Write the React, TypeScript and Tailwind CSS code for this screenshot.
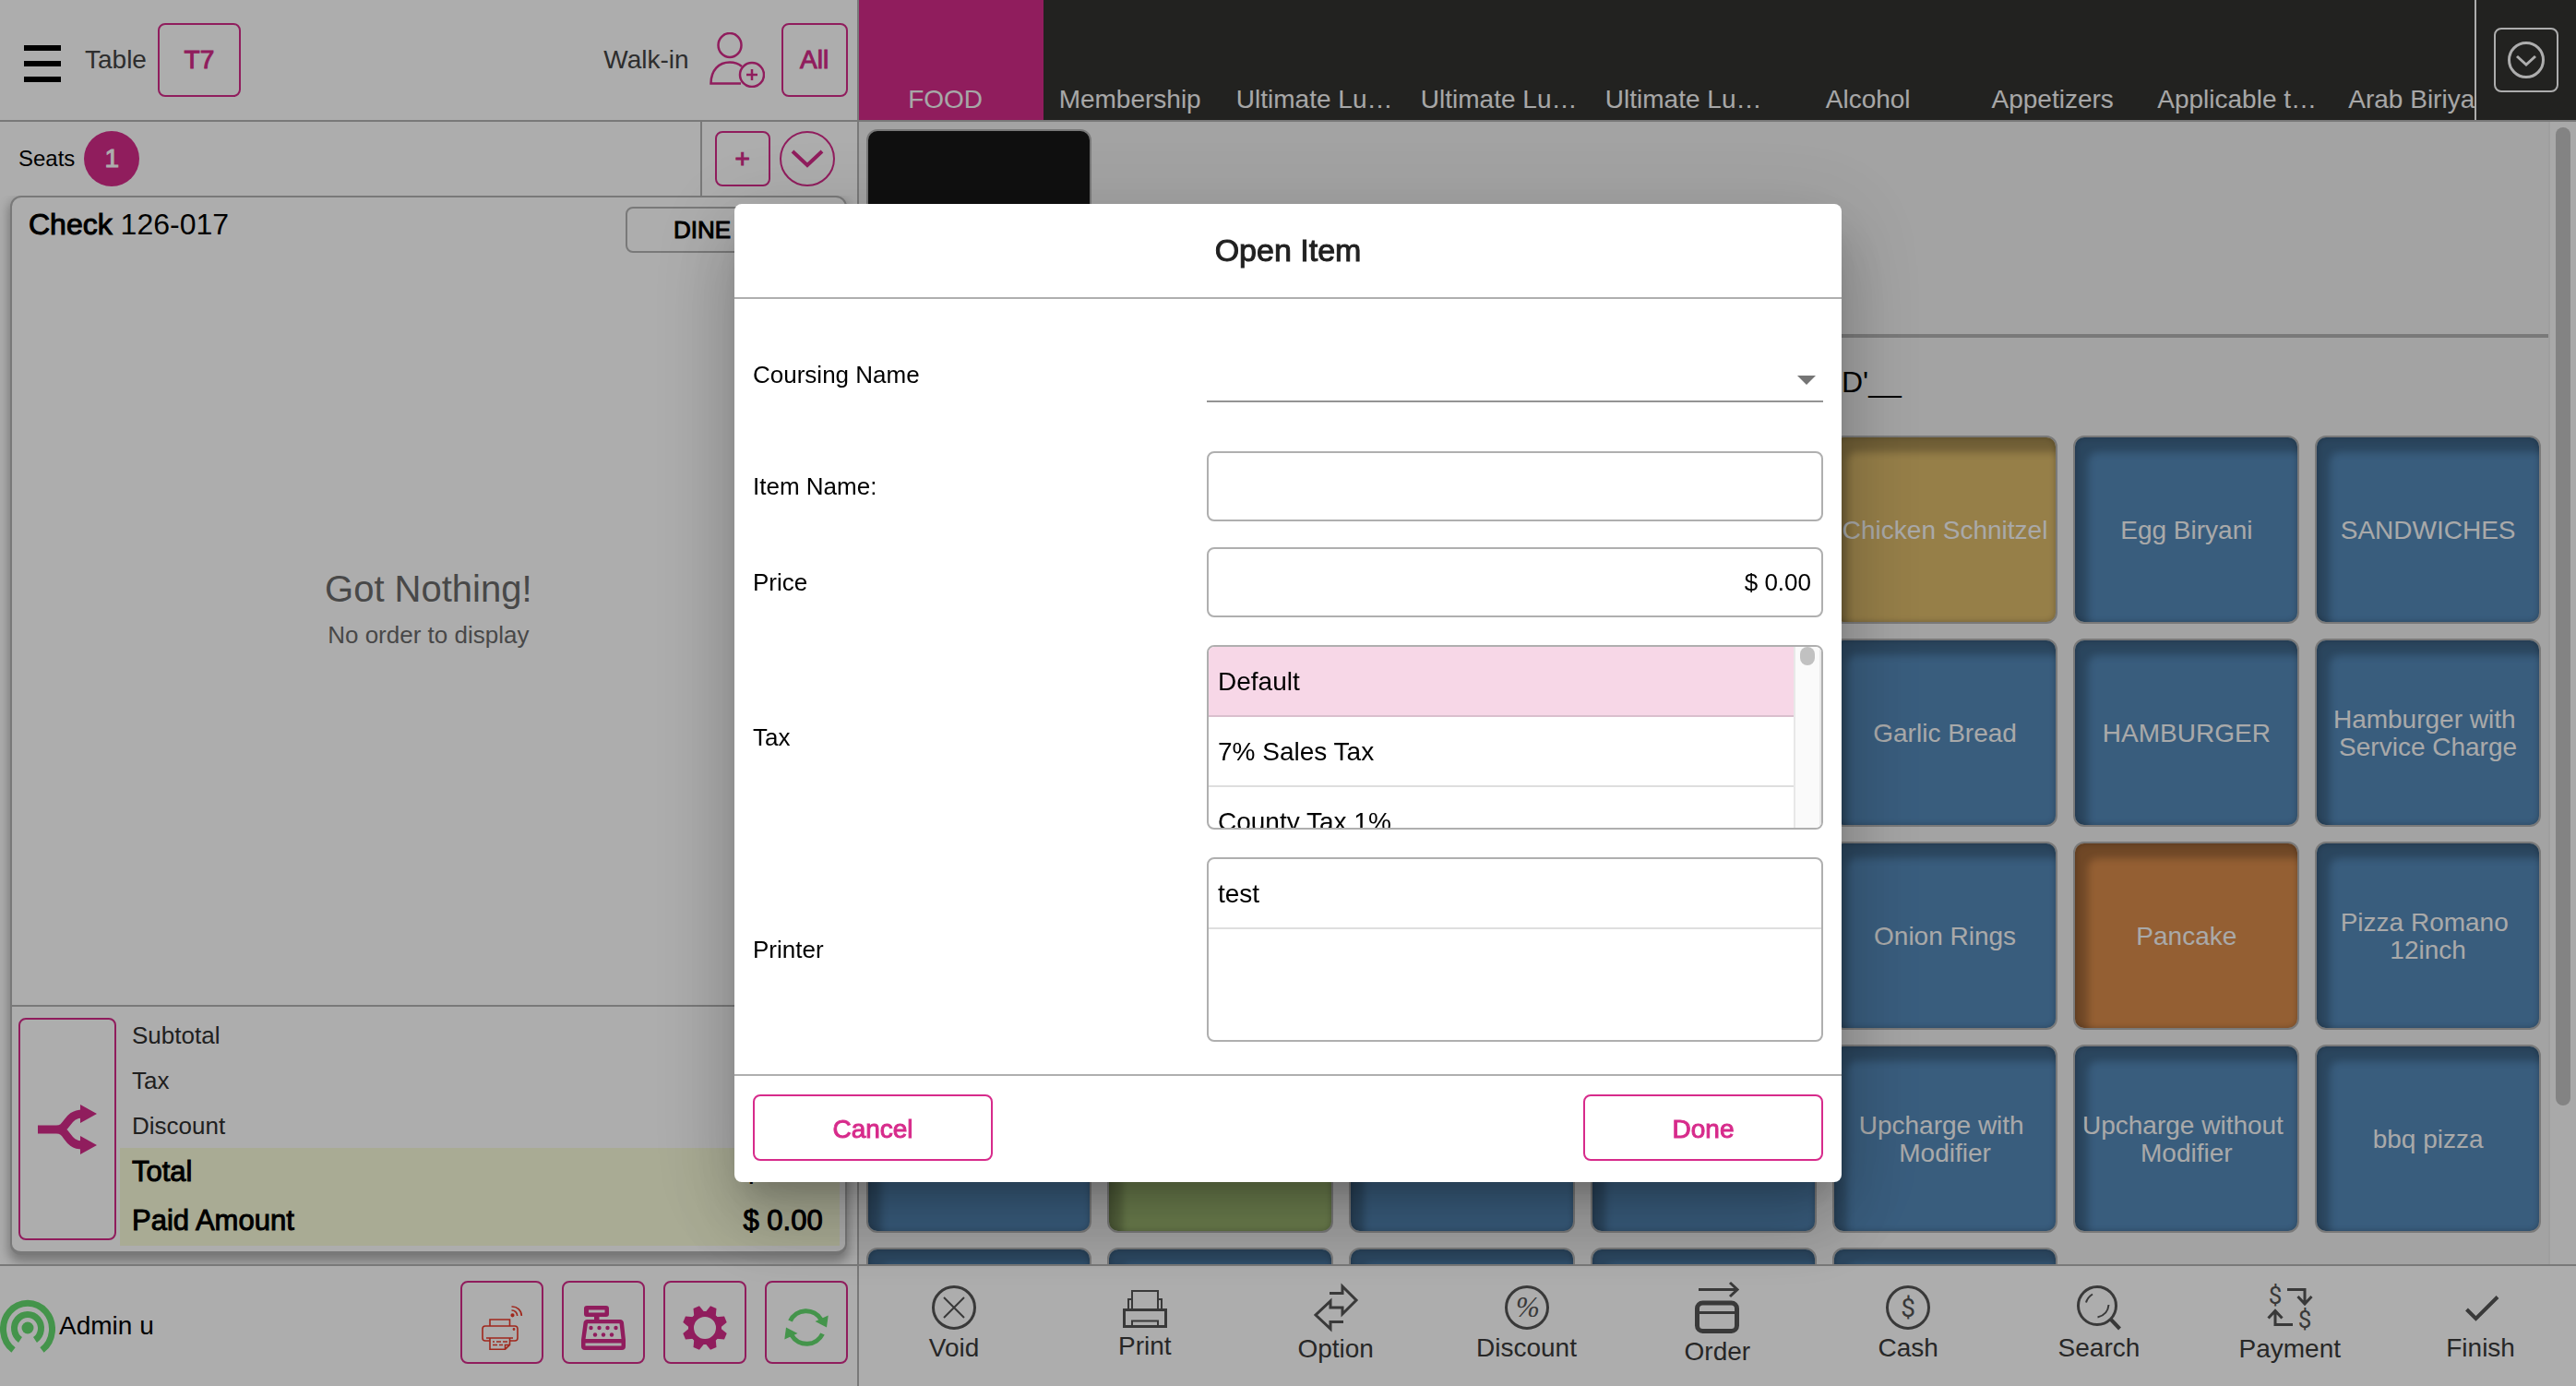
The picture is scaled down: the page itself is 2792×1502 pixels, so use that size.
import React from "react";

/* ---------- icons ---------- */

function PersonAddIcon() {
  return (
    <svg width="60" height="60" viewBox="0 0 60 60" fill="none" stroke="currentColor" strokeWidth="2.5">
      <ellipse cx="22" cy="14" rx="12.5" ry="13" />
      <path d="M34 55.5H1.5C1.5 41 10 32.500 22 32.500c5 0 9.500 1.500 13 4.500" />
      <circle cx="46" cy="46" r="13" />
      <path d="M46 40v12M40 46h12" />
    </svg>
  );
}

function ChevronIcon() {
  return (
    <svg width="36" height="20" viewBox="0 0 36 20" fill="none" stroke="currentColor" strokeWidth="4">
      <path d="M2 2l16 15L34 2" />
    </svg>
  );
}

function CircleChevronIcon() {
  return (
    <svg width="40" height="40" viewBox="0 0 40 40" fill="none" stroke="currentColor" strokeWidth="3">
      <circle cx="20" cy="20" r="18.500" />
      <path d="M10 16l10 9 10-9" />
    </svg>
  );
}

function SplitIcon() {
  return (
    <svg width="64" height="54" viewBox="0 0 64 54" fill="currentColor">
      <path
        d="M0 27H24M20 27C34 27 30 10 49 10M20 27C34 27 30 44 49 44"
        fill="none"
        stroke="currentColor"
        strokeWidth="9"
      />
      <path d="M46 0l18 10-18 10zM46 34l18 10-18 10z" />
    </svg>
  );
}

function BroadcastIcon() {
  return (
    <svg width="60" height="60" viewBox="0 0 60 60" fill="none" stroke="#65db6f" strokeWidth="7">
      <path d="M14.500 56A26.500 28 0 1 1 45.500 56" />
      <path d="M22 45A14.500 15 0 1 1 38 45" />
      <circle cx="30" cy="32" r="6.500" fill="#65db6f" stroke="none" />
    </svg>
  );
}

function WirelessPrinterIcon() {
  return (
    <svg width="48" height="48" viewBox="0 0 48 48" fill="none" stroke="#ec3b2b" strokeWidth="1.600">
      <path d="M11 22v-7h21.500v7" />
      <path d="M11 38H6a3 3 0 0 1-3-3V25a3 3 0 0 1 3-3h32a3 3 0 0 1 3 3v10a3 3 0 0 1-3 3h-5" />
      <path d="M7 35h29M11 35v12.300h16.500l5-5V35M27.500 47v-4.500h5" />
      <path d="M14 39h2m2 0h5m2 0h5M14 42.500h5m2 0h4" />
      <circle cx="37" cy="25.500" r=".6" />
      <circle cx="35.500" cy="10.300" r="1.300" fill="#ec3b2b" />
      <path d="M34.500 5a6 6 0 0 1 6.200 6M34.500 1a10 10 0 0 1 10.800 10" />
    </svg>
  );
}

function RegisterIcon() {
  return (
    <svg width="48" height="48" viewBox="0 0 48 48" fill="currentColor">
      <path
        fillRule="evenodd"
        d="M6 0H27a3 3 0 0 1 3 3V9a3 3 0 0 1-3 3H19.500v3H42a4 4 0 0 1 4 3.500L48 37v7a4 4 0 0 1-4 4H4a4 4 0 0 1-4-4V37L2.500 18.500A4 4 0 0 1 6.500 15H14V12H6a3 3 0 0 1-3-3V3A3 3 0 0 1 6 0ZM8 4.500V7.500H25.500V4.500ZM7 19.300 4.600 36H43.500L41.500 19.300ZM4.500 40.500v3h39v-3Z"
      />
      <g>
        <circle cx="10.500" cy="24" r="2.200" />
        <circle cx="19.500" cy="24" r="2.200" />
        <circle cx="28.500" cy="24" r="2.200" />
        <circle cx="37.500" cy="24" r="2.200" />
        <circle cx="15" cy="31.500" r="2.200" />
        <circle cx="24" cy="31.500" r="2.200" />
        <circle cx="33" cy="31.500" r="2.200" />
      </g>
    </svg>
  );
}

function GearIcon() {
  const teeth = [22.5, 67.5, 112.5, 157.5, 202.5, 247.5, 292.5, 337.5];
  return (
    <svg width="48" height="48" viewBox="0 0 48 48" fill="currentColor">
      <circle cx="24" cy="24" r="15" fill="none" stroke="currentColor" strokeWidth="6" />
      {teeth.map((angle) => (
        <path key={angle} d="M18 8l2.500-8.200h7L30 8z" transform={`rotate(${angle} 24 24)`} />
      ))}
    </svg>
  );
}

function SyncIcon() {
  return (
    <svg width="48" height="48" viewBox="0 0 48 48" fill="none">
      {[0, 180].map((angle) => (
        <g key={angle} transform={`rotate(${angle} 24 23.500)`}>
          <path d="M6.500 16.500A19 19 0 0 1 40 15" stroke="#65db6f" strokeWidth="5" />
          <path d="M47.700 10.500L46 23.500 33.500 17z" fill="#65db6f" />
        </g>
      ))}
    </svg>
  );
}

type IconProps = { width: number; height: number; children: React.ReactNode };

function ActionIcon({ width, height, children }: IconProps) {
  return (
    <svg
      width={width}
      height={height}
      viewBox={`0 0 ${width} ${height}`}
      className="overflow-visible"
      fill="none"
      stroke="#545454"
      strokeWidth="3"
    >
      {children}
    </svg>
  );
}

function Glyph({ x, y, size, children }: { x: number; y: number; size: number; children: string }) {
  return (
    <text
      x={x}
      y={y}
      fontSize={size}
      textAnchor="middle"
      fill="#545454"
      stroke="none"
      fontFamily="Roboto, sans-serif"
    >
      {children}
    </text>
  );
}

const actions: { label: string; icon: React.ReactNode }[] = [
  {
    label: "Void",
    icon: (
      <ActionIcon width={48} height={48}>
        <circle cx="24" cy="24" r="22.500" />
        <path d="M13 13l22 22M35 13L13 35" strokeWidth="2" />
      </ActionIcon>
    ),
  },
  {
    label: "Print",
    icon: (
      <ActionIcon width={48} height={44}>
        <path d="M1.500 24.500h45v18h-45z" />
        <path d="M10 24V4h28v20M10 13H6v11M38 13h4v11M10 42v-5.500h28V42" strokeWidth="2" />
      </ActionIcon>
    ),
  },
  {
    label: "Option",
    icon: (
      <ActionIcon width={48} height={50}>
        <path d="M17 9.500H31V2L46 17 31 32V25H18V18L2 33 18 48V40.500H32" />
      </ActionIcon>
    ),
  },
  {
    label: "Discount",
    icon: (
      <ActionIcon width={48} height={48}>
        <circle cx="24" cy="24" r="22.500" />
        <text
          x="25"
          y="34"
          fontSize="31"
          textAnchor="middle"
          fill="#545454"
          stroke="none"
          fontFamily="'Liberation Serif', serif"
          fontStyle="italic"
        >
          %
        </text>
      </ActionIcon>
    ),
  },
  {
    label: "Order",
    icon: (
      <ActionIcon width={48} height={56}>
        <path d="M4 8.500h42M38 1l8 7.500-8 7.500" />
        <rect x="2.500" y="23" width="43" height="30.500" rx="6" strokeWidth="5" />
        <path d="M3 33.500h42" />
      </ActionIcon>
    ),
  },
  {
    label: "Cash",
    icon: (
      <ActionIcon width={48} height={48}>
        <circle cx="24" cy="24" r="22.500" />
        <Glyph x={24} y={34} size={28}>$</Glyph>
      </ActionIcon>
    ),
  },
  {
    label: "Search",
    icon: (
      <ActionIcon width={48} height={48}>
        <circle cx="22" cy="22" r="20.500" />
        <path d="M37 37l9.500 10" strokeWidth="4" />
        <path d="M10 18.500q1.500-5.500 7-9M34.500 21q-1 11-12 13.500" strokeWidth="2" />
      </ActionIcon>
    ),
  },
  {
    label: "Payment",
    icon: (
      <ActionIcon width={48} height={50}>
        <Glyph x={8} y={21} size={26}>$</Glyph>
        <Glyph x={40} y={47} size={26}>$</Glyph>
        <path d="M21 5.500h19v15M32.500 13l7.500 8 7.500-8M27 43.500H8V29M.500 36.500l7.500-8 7.500 8" />
      </ActionIcon>
    ),
  },
  {
    label: "Finish",
    icon: (
      <ActionIcon width={48} height={48}>
        <path d="M8.500 26l10 10L42 12.500" strokeWidth="4" />
      </ActionIcon>
    ),
  },
];

/* ---------- data ---------- */

const tabs = [
  "FOOD",
  "Membership",
  "Ultimate Lu…",
  "Ultimate Lu…",
  "Ultimate Lu…",
  "Alcohol",
  "Appetizers",
  "Applicable t…",
  "Arab Biriyani",
];

const BLUE = "bg-[#5489b9]";
const GOLD = "bg-[#ddbb6b]";
const ORANGE = "bg-[#db8d4c]";
const GREEN = "bg-[#a0bb73]";

type Item = { name?: string; color: string };

const blank: Item = { color: BLUE };

const items: Item[] = [
  blank, blank, blank, blank,
  { name: "Chicken Schnitzel", color: GOLD },
  { name: "Egg Biryani", color: BLUE },
  { name: "SANDWICHES", color: BLUE },
  blank, blank, blank, blank,
  { name: "Garlic Bread", color: BLUE },
  { name: "HAMBURGER", color: BLUE },
  { name: "Hamburger with\u00a0\nService Charge", color: BLUE },
  blank, blank, blank, blank,
  { name: "Onion Rings", color: BLUE },
  { name: "Pancake", color: ORANGE },
  { name: "Pizza Romano\u00a0\n12inch", color: BLUE },
  blank,
  { color: GREEN },
  blank, blank,
  { name: "Upcharge with\u00a0\nModifier", color: BLUE },
  { name: "Upcharge without\u00a0\nModifier", color: BLUE },
  { name: "bbq pizza", color: BLUE },
  blank, blank, blank, blank, blank,
];

const medium = "[-webkit-text-stroke:1px_currentColor]";

/* ---------- left pane ---------- */

function OrderPane() {
  return (
    <section className="flex w-1/3 shrink-0 flex-col border-r-2 border-[#b3b3b3] bg-white">
      <header className="flex h-[132px] shrink-0 items-center border-b-2 border-[#b3b3b3] pr-[10px] pl-[26px] text-[28px] text-[#444]">
        <button aria-label="Menu" className="mt-2 flex flex-col gap-[11px]">
          <span className="h-[6px] w-10 bg-black" />
          <span className="h-[6px] w-10 bg-black" />
          <span className="h-[6px] w-10 bg-black" />
        </button>
        <span className="ml-[26px]">Table</span>
        <button className={`ml-3 h-20 w-[90px] rounded-lg border-2 border-[#d52b8a] text-[#d52b8a] ${medium}`}>
          T7
        </button>
        <span className="ml-auto">Walk-in</span>
        <button aria-label="Add customer" className="ml-[22px] text-[#d52b8a]">
          <PersonAddIcon />
        </button>
        <button className={`ml-[18px] h-20 w-[72px] rounded-lg border-2 border-[#d52b8a] text-[#d52b8a] ${medium}`}>
          All
        </button>
      </header>

      <div className="relative z-10 flex h-20 shrink-0 items-stretch bg-white">
        <div className="flex flex-1 items-center gap-[10px] pl-5">
          <span className="text-2xl text-black">Seats</span>
          <button className={`size-[60px] rounded-full bg-[#d52b8a] text-[28px] text-white ${medium}`}>1</button>
        </div>
        <div className="flex items-center gap-[10px] border-l-2 border-[#b3b3b3] pr-6 pl-[14px] text-[#d52b8a]">
          <button className={`size-[60px] rounded-lg border-2 border-[#d52b8a] text-[28px] ${medium}`}>+</button>
          <button
            aria-label="Expand seats"
            className="flex size-[60px] items-center justify-center rounded-full border-2 border-[#d52b8a]"
          >
            <ChevronIcon />
          </button>
        </div>
      </div>

      <div className="mx-[11px] mb-[10px] flex min-h-0 flex-1 flex-col rounded-xl border-2 border-b-4 border-[#b3b3b3] bg-white shadow-[0_6px_12px_2px_rgba(0,0,0,0.3)]">
        <div className="flex h-[64px] items-start justify-between pt-[10px] pr-[10px] pl-[18px]">
          <h2 className="text-[32px] leading-[38px] text-black">
            <span className={medium}>Check</span> 126-017
          </h2>
          <button className={`h-[50px] w-[228px] rounded-lg border-2 border-[#b3b3b3] pr-7 text-[26px] text-black ${medium}`}>
            DINE IN
          </button>
        </div>
        <div className="flex min-h-0 flex-1 flex-col items-center justify-center pb-12 text-[#6b6b6b]">
          <p className="text-[40px] leading-[56px]">Got Nothing!</p>
          <p className="text-[26px] leading-[44px]">No order to display</p>
        </div>
        <div className="flex border-t-2 border-[#b3b3b3] py-[6px] pr-[6px] pl-[7px]">
          <button
            aria-label="Split check"
            className="my-[6px] mr-1 flex w-[106px] shrink-0 items-center justify-center rounded-lg border-2 border-[#d52b8a] text-[#d52b8a]"
          >
            <SplitIcon />
          </button>
          <dl className="flex-1 text-[26px] text-[#303030]">
            <dt className="h-[49px] pl-[13px] leading-[50px]">Subtotal</dt>
            <dt className="h-[49px] pl-[13px] leading-[50px]">Tax</dt>
            <dt className="h-[49px] pl-[13px] leading-[50px]">Discount</dt>
            <div className={`flex h-[53px] items-center justify-between bg-[#fafddb] pr-[18px] pl-[13px] text-[31px] text-black ${medium}`}>
              <dt>Total</dt>
              <dd>$ 0.00</dd>
            </div>
            <div className={`flex h-[53px] items-center justify-between bg-[#fafddb] pr-[18px] pl-[13px] text-[31px] text-black ${medium}`}>
              <dt>Paid Amount</dt>
              <dd>$ 0.00</dd>
            </div>
          </dl>
        </div>
      </div>

      <footer className="relative flex h-[132px] shrink-0 items-center border-t-2 border-[#b3b3b3] bg-white pr-[10px] text-[#d52b8a]">
        <BroadcastIcon />
        <span className="ml-1 text-[28px] text-black">Admin u</span>
        <div className="mb-2 ml-auto flex gap-5">
          {[
            { label: "Printer status", icon: <WirelessPrinterIcon /> },
            { label: "Cash drawer", icon: <RegisterIcon /> },
            { label: "Settings", icon: <GearIcon /> },
            { label: "Sync", icon: <SyncIcon /> },
          ].map((b) => (
            <button
              key={b.label}
              aria-label={b.label}
              className="flex size-[90px] items-center justify-center rounded-lg border-2 border-[#d52b8a] pt-3"
            >
              {b.icon}
            </button>
          ))}
        </div>
      </footer>
    </section>
  );
}

/* ---------- right pane ---------- */

function MenuPane() {
  return (
    <section className="flex min-w-0 flex-1 flex-col bg-[#f1f1f1]">
      <nav className="flex h-[132px] shrink-0 border-b-2 border-[#b3b3b3] bg-[#333330] text-[28px] text-white">
        <div className="flex min-w-0 flex-1 overflow-hidden">
          {tabs.map((tab, i) => (
            <button
              key={i}
              className={`flex w-[200px] shrink-0 items-end justify-center pr-3 pb-1 leading-9 whitespace-nowrap text-[#f6f6f6] ${
                i === 0 ? "bg-[#d52b8a]" : ""
              }`}
            >
              {tab}
            </button>
          ))}
        </div>
        <div className="flex items-center border-l-2 border-white px-[19px]">
          <button
            aria-label="More categories"
            className="flex size-[70px] items-center justify-center rounded-lg border-2 border-white"
          >
            <CircleChevronIcon />
          </button>
        </div>
      </nav>

      <div className="flex min-h-0 flex-1">
        <div className="min-w-0 flex-1 overflow-hidden">
          <div className="grid grid-cols-7 gap-x-[17px] px-2 pt-2 pb-[18px]">
            <button
              aria-label="Category"
              className="h-[204px] rounded-xl border-2 border-[#b3b3b3] bg-[#171717]"
            />
          </div>
          <h2 className="flex h-[100px] items-center justify-center border-t-4 border-[#b3b3b3] pl-1 text-[32px] text-black">
            __Menu Items from 'FOOD'__
          </h2>
          <div className="mt-[10px] grid grid-cols-7 gap-x-[17px] gap-y-4 px-2">
            {items.map((item, i) => (
              <button
                key={i}
                className={`h-[204px] rounded-xl border-2 border-[#b3b3b3] pt-[2px] text-center text-[28px] leading-[30px] whitespace-pre text-[#fafafa] shadow-[inset_14px_16px_8px_rgba(0,0,0,0.25),inset_0_0_6px_rgba(0,0,0,0.25)] ${item.color}`}
              >
                <span className="flex justify-center">{item.name}</span>
              </button>
            ))}
          </div>
        </div>
        <div className="w-[30px] shrink-0 border-l-2 border-[#ebebeb] bg-[#fafafa] px-[6px] pt-[6px]">
          <div className="h-[86%] w-4 rounded-full bg-[#c1c1c1]" />
        </div>
      </div>

      <footer className="grid h-[132px] shrink-0 grid-cols-9 border-t-2 border-[#b3b3b3] bg-white">
        {actions.map((a) => (
          <button key={a.label} className="flex flex-col items-center justify-center text-[28px] leading-10 text-[#3a3a3a]">
            {a.icon}
            <span>{a.label}</span>
          </button>
        ))}
      </footer>
    </section>
  );
}

/* ---------- dialog ---------- */

const field = "h-[76px] w-full rounded-lg border-2 border-[#afafaf] bg-white px-[11px] text-[26px] text-black outline-none";

function OpenItemDialog() {
  return (
    <div className="fixed inset-0 z-20 flex items-center justify-center bg-black/32">
      <div
        role="dialog"
        aria-labelledby="dialog-title"
        className="flex w-[1200px] max-w-full flex-col rounded-lg bg-white text-[26px] text-black shadow-[0_22px_30px_-14px_rgba(0,0,0,0.2),0_48px_76px_6px_rgba(0,0,0,0.14),0_18px_92px_16px_rgba(0,0,0,0.12)]"
      >
        <h1
          id="dialog-title"
          className={`flex h-[103px] items-center justify-center border-b-2 border-[#afafaf] text-[34px] text-[#212121] ${medium}`}
        >
          Open Item
        </h1>

        <form className="grid grid-cols-[492fr_668fr] items-center px-5 pt-[52px] pb-[35px]">
          <label htmlFor="coursing" className="mb-[53px] leading-[60px]">Coursing Name</label>
          <div className="relative mb-[53px] h-[60px]">
            <select
              id="coursing"
              className="h-[60px] w-full appearance-none border-b-2 border-[#949494] bg-transparent outline-none"
            />
            <svg
              className="pointer-events-none absolute top-[31px] right-2"
              width="20"
              height="10"
              viewBox="0 0 20 10"
              fill="#757575"
            >
              <path d="M0 0h20L10 10z" />
            </svg>
          </div>

          <label htmlFor="item-name" className="mb-7">Item Name:</label>
          <input id="item-name" type="text" className={`mb-7 ${field}`} />

          <label htmlFor="price" className="mb-[30px]">Price</label>
          <input id="price" type="text" defaultValue="$ 0.00" className={`mb-[30px] text-right ${field}`} />

          <span id="tax-label" className="mb-[30px]">Tax</span>
          <div className="mb-[30px] flex h-[200px] overflow-hidden rounded-lg border-2 border-[#afafaf] text-[28px]">
            <div role="listbox" aria-labelledby="tax-label" className="flex-1 overflow-hidden">
              <button
                type="button"
                role="option"
                aria-selected="true"
                className="block h-[76px] w-full border-b-2 border-[#dabfcd] bg-[#f7d7e7] pt-[2px] pl-[10px] text-left"
              >
                Default
              </button>
              <button
                type="button"
                role="option"
                aria-selected="false"
                className="block h-[76px] w-full border-b-2 border-[#dedede] pt-[2px] pl-[10px] text-left"
              >
                7% Sales Tax
              </button>
              <button
                type="button"
                role="option"
                aria-selected="false"
                className="block h-[76px] w-full border-b-2 border-[#dedede] pt-[2px] pl-[10px] text-left"
              >
                County Tax 1%
              </button>
            </div>
            <div className="w-[30px] shrink-0 border-x-2 border-[#e8e8e8] bg-[#fafafa] px-[5px]">
              <div className="h-5 w-4 rounded-full bg-[#c1c1c1]" />
            </div>
          </div>

          <span id="printer-label">Printer</span>
          <div
            role="listbox"
            aria-labelledby="printer-label"
            className="h-[200px] overflow-hidden rounded-lg border-2 border-[#afafaf] text-[28px]"
          >
            <button
              type="button"
              role="option"
              aria-selected="false"
              className="block h-[76px] w-full border-b-2 border-[#dedede] pt-[2px] pl-[10px] text-left"
            >
              test
            </button>
          </div>
        </form>

        <div className={`flex justify-between border-t-2 border-[#afafaf] px-5 pt-5 pb-[23px] text-[28px] text-[#d72b8b] ${medium}`}>
          <button className="h-[72px] w-[260px] rounded-lg border-2 border-[#d72b8b] pt-1">Cancel</button>
          <button className="h-[72px] w-[260px] rounded-lg border-2 border-[#d72b8b] pt-1">Done</button>
        </div>
      </div>
    </div>
  );
}

export default function App() {
  return (
    <div className="flex h-screen w-full overflow-hidden font-['Liberation_Sans',Arial,sans-serif]">
      <OrderPane />
      <MenuPane />
      <OpenItemDialog />
    </div>
  );
}
